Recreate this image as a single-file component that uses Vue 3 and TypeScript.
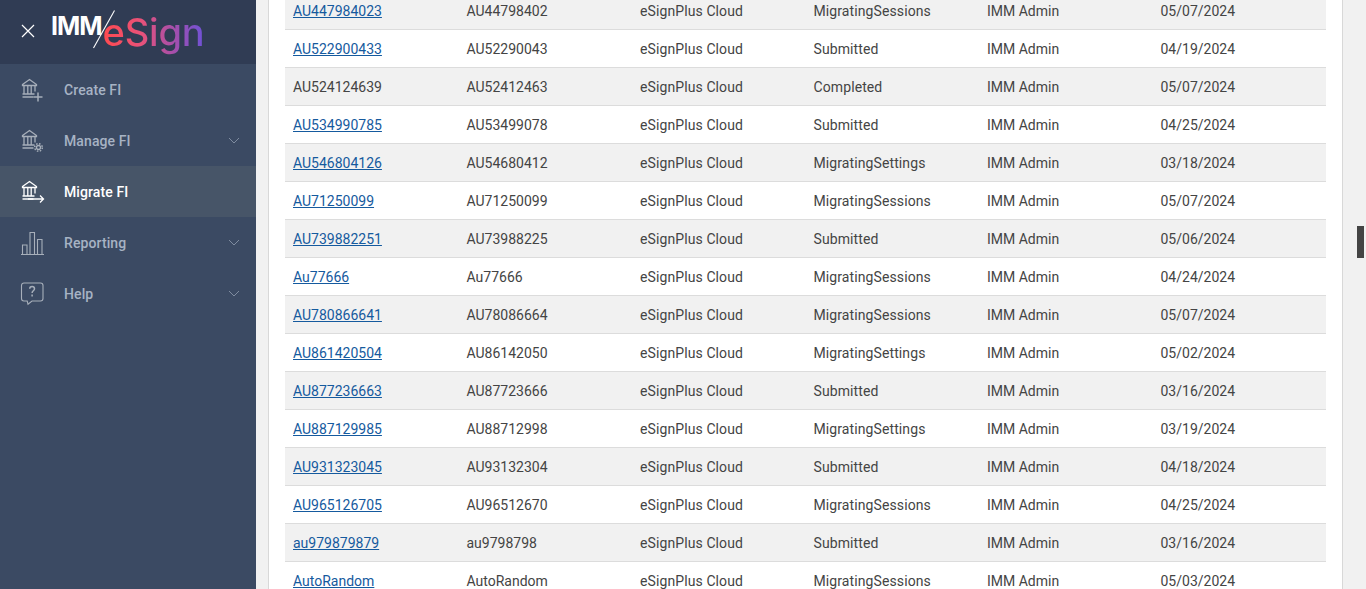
<script setup lang="ts">
interface Row {
  id: string
  linked: boolean
  code: string
  status: string
  date: string
}

const rows: Row[] = [
  { id: 'AU447984023', linked: true, code: 'AU44798402', status: 'MigratingSessions', date: '05/07/2024' },
  { id: 'AU522900433', linked: true, code: 'AU52290043', status: 'Submitted', date: '04/19/2024' },
  { id: 'AU524124639', linked: false, code: 'AU52412463', status: 'Completed', date: '05/07/2024' },
  { id: 'AU534990785', linked: true, code: 'AU53499078', status: 'Submitted', date: '04/25/2024' },
  { id: 'AU546804126', linked: true, code: 'AU54680412', status: 'MigratingSettings', date: '03/18/2024' },
  { id: 'AU71250099', linked: true, code: 'AU71250099', status: 'MigratingSessions', date: '05/07/2024' },
  { id: 'AU739882251', linked: true, code: 'AU73988225', status: 'Submitted', date: '05/06/2024' },
  { id: 'Au77666', linked: true, code: 'Au77666', status: 'MigratingSessions', date: '04/24/2024' },
  { id: 'AU780866641', linked: true, code: 'AU78086664', status: 'MigratingSessions', date: '05/07/2024' },
  { id: 'AU861420504', linked: true, code: 'AU86142050', status: 'MigratingSettings', date: '05/02/2024' },
  { id: 'AU877236663', linked: true, code: 'AU87723666', status: 'Submitted', date: '03/16/2024' },
  { id: 'AU887129985', linked: true, code: 'AU88712998', status: 'MigratingSettings', date: '03/19/2024' },
  { id: 'AU931323045', linked: true, code: 'AU93132304', status: 'Submitted', date: '04/18/2024' },
  { id: 'AU965126705', linked: true, code: 'AU96512670', status: 'MigratingSessions', date: '04/25/2024' },
  { id: 'au979879879', linked: true, code: 'au9798798', status: 'Submitted', date: '03/16/2024' },
  { id: 'AutoRandom', linked: true, code: 'AutoRandom', status: 'MigratingSessions', date: '05/03/2024' },
]

const menu = [
  { label: 'Create FI', icon: 'create', arrow: false, active: false },
  { label: 'Manage FI', icon: 'manage', arrow: true, active: false },
  { label: 'Migrate FI', icon: 'migrate', arrow: false, active: true },
  { label: 'Reporting', icon: 'reporting', arrow: true, active: false },
  { label: 'Help', icon: 'help', arrow: true, active: false },
]
</script>

<template>
  <div class="page">
    <aside class="sidebar">
      <div class="brand">
        <svg class="close" viewBox="0 0 14 14" width="14" height="14">
          <path d="M1 1l12 12M13 1L1 13" fill="none" stroke="#fff" stroke-width="1.2" />
        </svg>
        <div class="logo">
          <span class="logo-imm">IMM</span>
          <span class="logo-esign">eSign</span>
          <svg class="logo-slash" viewBox="0 0 24 40" width="24" height="40">
            <path d="M22.500 0.500L1.500 38" stroke="#fff" stroke-width="1.100" fill="none" />
          </svg>
        </div>
      </div>

      <nav>
        <a v-for="item in menu" :key="item.label" class="nav-item" :class="{ active: item.active }">
          <svg class="nav-icon" viewBox="0 0 26 26" width="26" height="26" fill="none" stroke="currentColor" stroke-width="1.300">
            <template v-if="item.icon === 'reporting'">
              <path d="M1 24.500h23M2.500 24v-9h4.500v9M10 24V2.500h4.500V24M17.500 24V9.500H22V24" stroke-width="1.100" />
            </template>
            <template v-else-if="item.icon === 'help'">
              <path d="M4 2h16.500A2.500 2.500 0 0 1 23 4.500v13a2.500 2.500 0 0 1-2.500 2.500H12l-4 3.200-.8-3.200H4a2.500 2.500 0 0 1-2.500-2.500v-13A2.500 2.500 0 0 1 4 2z" stroke-width="1.100" />
              <path d="M9.700 7.800c0-3 4.800-3 4.800 0 0 2-2.400 2-2.400 4.200M12.100 13.600v1.800" stroke-width="1.500" />
            </template>
            <template v-else>
              <path d="M2.500 7.500L9.500 2.500 16.500 7.500v1H2.500zM4 9v7.500M7.800 9v7.500M11.200 9v7.500M15 9v5.500M2.500 17h12M2.500 20h11" />
              <path v-if="item.icon === 'create'" d="M18 15.500v9M13.500 20h9" stroke-width="1.500" />
              <template v-if="item.icon === 'manage'">
                <circle cx="18.500" cy="19.500" r="2" />
                <circle cx="18.500" cy="19.500" r="3.800" stroke-width="1.500" stroke-dasharray="1.500 1.500" />
              </template>
              <path v-if="item.icon === 'migrate'" d="M8 20h15.500M20 16.500l3.500 3.500-3.500 3.500" />
            </template>
          </svg>
          <span class="nav-label">{{ item.label }}</span>
          <svg v-if="item.arrow" class="chevron" viewBox="0 0 12 7" width="12" height="7">
            <path d="M1 1l5 5 5-5" fill="none" stroke="currentColor" stroke-width="1" />
          </svg>
        </a>
      </nav>
    </aside>

    <main class="content">
      <div class="panel">
        <table class="grid">
          <tbody>
            <tr v-for="row in rows" :key="row.id">
              <td>
                <a v-if="row.linked" class="link">{{ row.id }}</a>
                <template v-else>{{ row.id }}</template>
              </td>
              <td>{{ row.code }}</td>
              <td class="wide">eSignPlus Cloud</td>
              <td class="wide">{{ row.status }}</td>
              <td>IMM Admin</td>
              <td>{{ row.date }}</td>
            </tr>
          </tbody>
        </table>
      </div>
      <div class="scroll-thumb"></div>
    </main>
  </div>
</template>

<style>
html,
body {
  margin: 0;
  overflow: hidden;
}
</style>

<style scoped>
.page {
  display: flex;
  width: 1366px;
  height: 589px;
  overflow: hidden;
  font-family: Roboto, "Liberation Sans", sans-serif;
  font-size: 14px;
  color: #444;
}

.sidebar {
  flex: 0 0 256px;
  background: #3b4a63;
}

.brand {
  display: flex;
  align-items: center;
  height: 64px;
  padding-left: 21px;
  background: #303c54;
}

.close {
  flex: none;
  margin-bottom: 2px;
}

.logo {
  position: relative;
  display: flex;
  align-items: flex-start;
  height: 64px;
  margin-left: 15px;
}

.logo-imm {
  margin: 11px 0 0 1px;
  font-family: Inter, Roboto, sans-serif;
  font-size: 25px;
  font-weight: 700;
  line-height: 30px;
  letter-spacing: -1px;
  color: #fff;
}

.logo-slash {
  position: absolute;
  top: 10px;
  left: 42px;
}

.logo-esign {
  margin: 9px 0 0 1px;
  font-family: Inter, Roboto, sans-serif;
  font-size: 38px;
  font-weight: 500;
  line-height: 46px;
  letter-spacing: -0.2px;
  padding-bottom: 6px;
  background: linear-gradient(90deg, #ff4a4f 0%, #e8527a 38%, #a14fae 72%, #6f52d6 100%);
  -webkit-background-clip: text;
  background-clip: text;
  color: transparent;
}

.nav-item {
  display: flex;
  align-items: center;
  height: 51px;
  padding: 0 16px 0 20px;
  color: #a7b3c4;
}

.nav-item.active {
  background: #475568;
  color: #fff;
}

.nav-icon {
  flex: none;
  color: #a7afba;
}

.active .nav-icon {
  color: #fff;
}

.nav-label {
  flex: 1;
  margin-left: 18px;
  font-weight: 500;
  letter-spacing: 0.1px;
}

.chevron {
  flex: none;
  color: #7f8ca0;
}

.content {
  position: relative;
  flex: 1;
  min-width: 0;
  padding-left: 12px;
  background: #f1f1f1;
}

.panel {
  box-sizing: border-box;
  width: 1075px;
  height: 589px;
  padding: 0 16px;
  overflow: hidden;
  background: #fff;
  border-left: 1px solid #d8d8d8;
  border-right: 1px solid #d8d8d8;
}

.grid {
  width: 1041px;
  margin-top: -8px;
  table-layout: fixed;
  border-collapse: collapse;
  line-height: 20px;
}

.grid td {
  height: 37px;
  padding: 0 8px;
  border-bottom: 1px solid #dcdcdc;
  box-sizing: content-box;
  white-space: nowrap;
}

.grid td.wide {
  letter-spacing: 0.1px;
}

.grid tr:nth-child(odd) td {
  background: #f1f1f1;
}

.link {
  color: #155a9e;
  text-decoration: underline;
}

.scroll-thumb {
  position: absolute;
  top: 226px;
  right: 2px;
  width: 7px;
  height: 32px;
  background: #444;
}
</style>
